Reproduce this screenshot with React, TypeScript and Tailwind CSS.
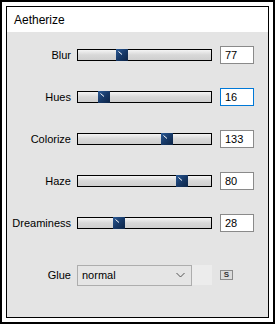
import React from 'react';

const rows = [
  { label: 'Blur', value: '77', thumb: 38 },
  { label: 'Hues', value: '16', thumb: 20, focused: true },
  { label: 'Colorize', value: '133', thumb: 83 },
  { label: 'Haze', value: '80', thumb: 98 },
  { label: 'Dreaminess', value: '28', thumb: 35 },
];

function Thumb({ left }: { left: number }) {
  return (
    <div
      className="absolute top-[-1px] h-[12px] w-[12px] bg-gradient-to-br from-[#2b5a96] via-[#173968] to-[#0d2446]"
      style={{ left }}
    >
      <svg width="12" height="12" className="absolute left-0 top-0">
        <line x1="2.5" y1="2.5" x2="6" y2="5.5" stroke="#ffffff" strokeWidth="1" />
      </svg>
    </div>
  );
}

function SliderRow({
  label,
  value,
  thumb,
  focused,
}: {
  label: string;
  value: string;
  thumb: number;
  focused?: boolean;
}) {
  return (
    <div className="flex h-[42px] items-center">
      <div className="w-[64px] text-right text-[11px] text-black">{label}</div>
      <div className="relative ml-[6px] h-[12px] w-[135px] border border-black bg-gradient-to-b from-[#f4f4f4] via-[#d8d8d8] to-[#cfcfcf]">
        <Thumb left={thumb} />
      </div>
      <div
        className={`ml-[8px] flex h-[18px] w-[34px] items-center bg-white pl-[4px] text-[11px] text-black ${
          focused ? 'border border-[#0078d7]' : 'border border-[#8a8a8a]'
        }`}
      >
        {value}
      </div>
    </div>
  );
}

export default function App() {
  return (
    <div
      className="h-[324px] w-[275px] border-2 border-black bg-white p-[4px]"
      style={{ fontFamily: '"Liberation Sans", Arial, sans-serif' }}
    >
      <div className="flex h-full flex-col border border-black">
        <div className="flex h-[25px] items-center bg-white pl-[7px] text-[12px] text-black">
          Aetherize
        </div>
        <div className="flex flex-1 flex-col bg-[#e4e4e4] pt-[2px]">
          {rows.map((r) => (
            <SliderRow key={r.label} {...r} />
          ))}
          <div className="mt-[10px] flex h-[42px] items-center">
            <div className="w-[64px] text-right text-[11px] text-black">Glue</div>
            <div className="ml-[6px] flex h-[21px] w-[115px] items-center justify-between border border-[#adadad] bg-[#e5e5e5] pl-[4px] pr-[6px] text-[11px] text-black">
              <span>normal</span>
              <svg width="9" height="6" viewBox="0 0 9 6">
                <path d="M0.5 1 L4.5 5 L8.5 1" fill="none" stroke="#555" strokeWidth="1" />
              </svg>
            </div>
            <div className="h-[20px] w-[20px] bg-[#ececec]" />
            <div className="ml-[8px] flex h-[10px] w-[13px] items-center justify-center border border-[#8a8a8a] bg-[#dcdcdc] text-[8px] font-bold leading-none text-[#333]">
              S
            </div>
          </div>
        </div>
      </div>
    </div>
  );
}
